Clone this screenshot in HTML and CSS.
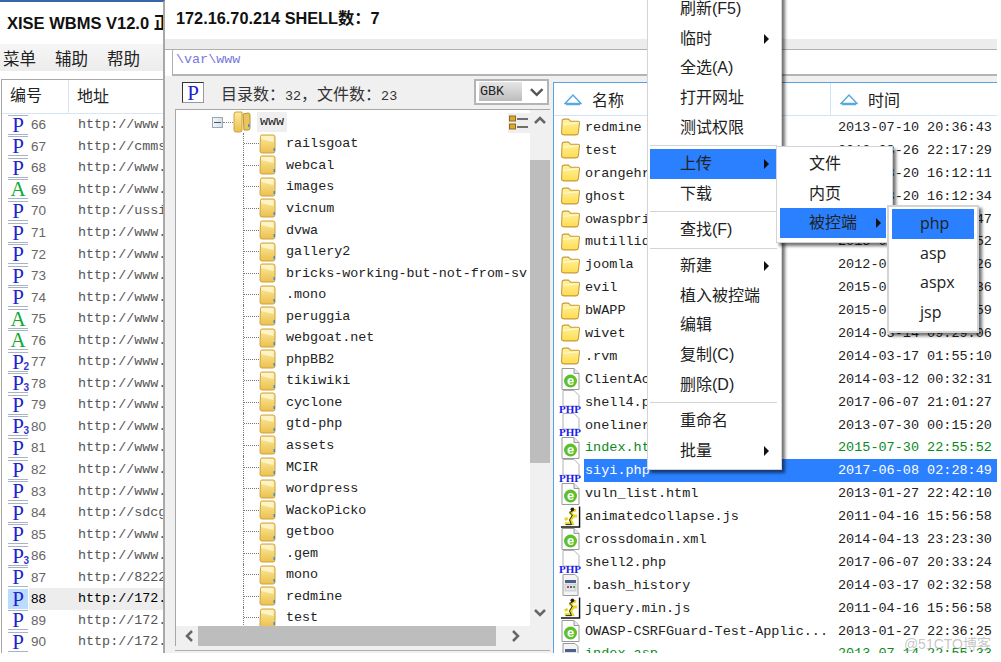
FILE: index.html
```html
<!DOCTYPE html>
<html lang="en">
<head>
    <meta charset="UTF-8">
    <meta name="viewport" content="width=device-width, initial-scale=1.0">
    <title>XISE WBMS</title>
    <link rel="stylesheet" href="styles.css">
</head>
<body>
<svg class="defs" width="0" height="0">
    <defs>
        <linearGradient id="treeFill" x1="0" y1="0" x2="0" y2="1"><stop offset="0" stop-color="#fbeb9e"/><stop offset="1" stop-color="#ecc04e"/></linearGradient>
        <linearGradient id="listFill" x1="0" y1="0" x2="0" y2="1"><stop offset="0" stop-color="#fff3a4"/><stop offset="1" stop-color="#ffdc50"/></linearGradient>
        <symbol id="icoTree" viewBox="0 0 17 20">
            <path d="M1.5 2.5Q1.5 1 3 1H14Q16 1 16 3V17Q16 19 14 19H3Q1 19 1 17Z" fill="url(#treeFill)" stroke="#cfa23c"/>
            <path d="M2 2H13Q14.500 2 14.500 4V8L2 5Z" fill="#fdf3c4"/>
            <rect x="14.500" y="14" width="1.500" height="3" fill="#3d8fd8"/>
        </symbol>
        <symbol id="icoRoot" viewBox="0 0 18 22">
            <path d="M1 3Q1 1 3 1H9V19Q9 21 7 21H3Q1 21 1 19Z" fill="url(#treeFill)" stroke="#cfa23c"/>
            <path d="M10 3L15 2Q17 2 17 4V17Q17 19 15 19H11Z" fill="#e8c65c" stroke="#b89232"/>
            <rect x="15" y="13" width="1.500" height="3" fill="#3d8fd8"/>
        </symbol>
        <symbol id="icoFolder" viewBox="0 0 20 19">
            <path d="M2 4Q2 2 4 2H8L10 4H17Q19 4 18.500 6L17.500 15Q17 17 15 17H4Q1.500 17 1.500 15Z" fill="url(#listFill)" stroke="#c59a38"/>
            <path d="M3 7L18 5.500" stroke="#fff9d0" fill="none"/>
        </symbol>
        <symbol id="icoIe" viewBox="0 0 21 24">
            <path d="M2 1.500H14L19 6.500V22.500H2Z" fill="#fff" stroke="#9a9a9a"/>
            <path d="M14 1.500V6.500H19" fill="#e8e8e8" stroke="#9a9a9a"/>
            <circle cx="10.500" cy="14" r="6.500" fill="#5cc02c"/>
            <text x="10.500" y="18" class="ieMark">e</text>
        </symbol>
        <symbol id="icoPhp" viewBox="0 0 23 24">
            <path d="M4 .5H15L20 5.500V16H4Z" fill="#fff" stroke="#b0b0b0"/>
            <text x="0" y="22.500" class="phpMark">PHP</text>
        </symbol>
        <symbol id="icoJs" viewBox="0 0 22 24">
            <path d="M20.500 1V22.500H1" fill="none" stroke="#111" stroke-width="1.500"/>
            <path d="M5 19H13L11 15L14 11L11 8L14 5H17M14 11H18M8 13L5 15" fill="none" stroke="#e8d820" stroke-width="3"/>
            <circle cx="13" cy="4" r="2" fill="#222"/>
            <path d="M6 20H12L10 15L13 10L10 7L13 6" fill="none" stroke="#222"/>
        </symbol>
        <symbol id="icoBash" viewBox="0 0 21 24">
            <path d="M3 1.500H15L18 4.500V22.500H3Z" fill="#f4f4f4" stroke="#9a9a9a"/>
            <rect x="5" y="7" width="11" height="3" fill="#4e5f8a"/>
            <rect x="5" y="11" width="11" height="7" fill="#e4e4e4" stroke="#aaa" stroke-width=".5"/>
            <rect x="7" y="13" width="2" height="2" fill="#d04040"/>
            <rect x="10" y="13" width="2" height="2" fill="#4060c0"/>
            <rect x="13" y="13" width="2" height="2" fill="#50a050"/>
        </symbol>
        <symbol id="icoSort" viewBox="0 0 18 14">
            <path d="M1 11.500L9 3L17 11.500Z" fill="#fff" stroke="#58aadc" stroke-width="1.500"/>
            <path d="M2 12.500H16" stroke="#58aadc" stroke-width="1.500"/>
        </symbol>
    </defs>
</svg>

<div class="app">
    <section class="hosts">
        <div class="hosts-title">XISE WBMS V12.0 正式版</div>
        <nav class="menubar"><span>菜单</span><span>辅助</span><span>帮助</span></nav>
        <div class="hosts-list">
            <div class="hosts-head"><span class="col-no">编号</span><span class="col-url">地址</span></div>
            <div class="host"><span class="tag">P</span><span class="no">66</span><span class="url">http://www.</span></div>
            <div class="host"><span class="tag">P</span><span class="no">67</span><span class="url">http://cmms</span></div>
            <div class="host"><span class="tag">P</span><span class="no">68</span><span class="url">http://www.</span></div>
            <div class="host"><span class="tag asp">A</span><span class="no">69</span><span class="url">http://www.</span></div>
            <div class="host"><span class="tag">P</span><span class="no">70</span><span class="url">http://ussi</span></div>
            <div class="host"><span class="tag">P</span><span class="no">71</span><span class="url">http://www.</span></div>
            <div class="host"><span class="tag">P</span><span class="no">72</span><span class="url">http://www.</span></div>
            <div class="host"><span class="tag">P</span><span class="no">73</span><span class="url">http://www.</span></div>
            <div class="host"><span class="tag">P</span><span class="no">74</span><span class="url">http://www.</span></div>
            <div class="host"><span class="tag asp">A</span><span class="no">75</span><span class="url">http://www.</span></div>
            <div class="host"><span class="tag asp">A</span><span class="no">76</span><span class="url">http://www.</span></div>
            <div class="host"><span class="tag">P<sub>2</sub></span><span class="no">77</span><span class="url">http://www.</span></div>
            <div class="host"><span class="tag">P<sub>3</sub></span><span class="no">78</span><span class="url">http://www.</span></div>
            <div class="host"><span class="tag">P</span><span class="no">79</span><span class="url">http://www.</span></div>
            <div class="host"><span class="tag">P<sub>3</sub></span><span class="no">80</span><span class="url">http://www.</span></div>
            <div class="host"><span class="tag">P</span><span class="no">81</span><span class="url">http://www.</span></div>
            <div class="host"><span class="tag">P</span><span class="no">82</span><span class="url">http://www.</span></div>
            <div class="host"><span class="tag">P</span><span class="no">83</span><span class="url">http://www.</span></div>
            <div class="host"><span class="tag">P</span><span class="no">84</span><span class="url">http://sdcg</span></div>
            <div class="host"><span class="tag">P</span><span class="no">85</span><span class="url">http://www.</span></div>
            <div class="host"><span class="tag">P<sub>3</sub></span><span class="no">86</span><span class="url">http://www.</span></div>
            <div class="host"><span class="tag">P</span><span class="no">87</span><span class="url">http://8222</span></div>
            <div class="host current"><span class="tag">P</span><span class="no">88</span><span class="url">http://172.</span></div>
            <div class="host"><span class="tag">P</span><span class="no">89</span><span class="url">http://172.</span></div>
            <div class="host"><span class="tag">P</span><span class="no">90</span><span class="url">http://172.</span></div>
        </div>
    </section>

    <section class="shell">
        <h1 class="shell-title">172.16.70.214 SHELL数：7</h1>
        <div class="shell-band"></div>
        <div class="path-box">\var\www</div>
        <div class="shell-body">
            <div class="dirs">
                <div class="dirs-bar">
                    <span class="bar-tag">P</span>
                    <span class="count">目录数：<span class="num">32</span>，文件数：<span class="num">23</span></span>
                    <span class="charset"><span class="charset-val">GBK</span><svg width="16" height="10" viewBox="0 0 16 10"><path d="M2 2L8 8L14 2" fill="none" stroke="#555" stroke-width="2.500"/></svg></span>
                </div>
                <div class="tree-box">
                    <div class="tree-main">
                        <div class="tree">
                            <div class="root"><span class="minus"></span><span class="root-dots"></span><svg class="root-ico"><use href="#icoRoot"/></svg><span class="root-name">www</span></div>
                            <div class="node"><svg class="ico-tree"><use href="#icoTree"/></svg>railsgoat</div>
                            <div class="node"><svg class="ico-tree"><use href="#icoTree"/></svg>webcal</div>
                            <div class="node"><svg class="ico-tree"><use href="#icoTree"/></svg>images</div>
                            <div class="node"><svg class="ico-tree"><use href="#icoTree"/></svg>vicnum</div>
                            <div class="node"><svg class="ico-tree"><use href="#icoTree"/></svg>dvwa</div>
                            <div class="node"><svg class="ico-tree"><use href="#icoTree"/></svg>gallery2</div>
                            <div class="node"><svg class="ico-tree"><use href="#icoTree"/></svg>bricks-working-but-not-from-sv</div>
                            <div class="node"><svg class="ico-tree"><use href="#icoTree"/></svg>.mono</div>
                            <div class="node"><svg class="ico-tree"><use href="#icoTree"/></svg>peruggia</div>
                            <div class="node"><svg class="ico-tree"><use href="#icoTree"/></svg>webgoat.net</div>
                            <div class="node"><svg class="ico-tree"><use href="#icoTree"/></svg>phpBB2</div>
                            <div class="node"><svg class="ico-tree"><use href="#icoTree"/></svg>tikiwiki</div>
                            <div class="node"><svg class="ico-tree"><use href="#icoTree"/></svg>cyclone</div>
                            <div class="node"><svg class="ico-tree"><use href="#icoTree"/></svg>gtd-php</div>
                            <div class="node"><svg class="ico-tree"><use href="#icoTree"/></svg>assets</div>
                            <div class="node"><svg class="ico-tree"><use href="#icoTree"/></svg>MCIR</div>
                            <div class="node"><svg class="ico-tree"><use href="#icoTree"/></svg>wordpress</div>
                            <div class="node"><svg class="ico-tree"><use href="#icoTree"/></svg>WackoPicko</div>
                            <div class="node"><svg class="ico-tree"><use href="#icoTree"/></svg>getboo</div>
                            <div class="node"><svg class="ico-tree"><use href="#icoTree"/></svg>.gem</div>
                            <div class="node"><svg class="ico-tree"><use href="#icoTree"/></svg>mono</div>
                            <div class="node"><svg class="ico-tree"><use href="#icoTree"/></svg>redmine</div>
                            <div class="node"><svg class="ico-tree"><use href="#icoTree"/></svg>test</div>
                        </div>
                        <div class="tree-corner">
                            <svg width="21" height="20" viewBox="0 0 21 20"><rect x="1.500" y="3" width="6" height="5" fill="#e0a828" stroke="#8a6a20"/><rect x="1.500" y="11" width="6" height="5" fill="#e0a828" stroke="#8a6a20"/><path d="M9 6H20M9 14H20" stroke="#444" stroke-width="1.500"/></svg>
                        </div>
                        <div class="vbar">
                            <svg width="14" height="9" viewBox="0 0 14 9"><path d="M2 7L7 2L12 7" fill="none" stroke="#666" stroke-width="2.500"/></svg>
                            <div class="vthumb"></div>
                            <svg width="14" height="9" viewBox="0 0 14 9"><path d="M2 2L7 7L12 2" fill="none" stroke="#666" stroke-width="2.500"/></svg>
                        </div>
                    </div>
                    <div class="hbar">
                        <svg width="10" height="14" viewBox="0 0 10 14"><path d="M8 2L3 7L8 12" fill="none" stroke="#666" stroke-width="2.500"/></svg>
                        <div class="hthumb"></div>
                        <svg width="10" height="14" viewBox="0 0 10 14"><path d="M2 2L7 7L2 12" fill="none" stroke="#666" stroke-width="2.500"/></svg>
                    </div>
                </div>
                <div class="dirs-foot"></div>
            </div>

            <div class="files">
                <div class="files-head">
                    <span class="col-name"><svg class="sort"><use href="#icoSort"/></svg>名称</span>
                    <span class="col-time"><svg class="sort"><use href="#icoSort"/></svg>时间</span>
                </div>
                <div class="file"><svg class="ico"><use href="#icoFolder"/></svg><span class="name">redmine</span><span class="time">2013-07-10 20:36:43</span></div>
                <div class="file"><svg class="ico"><use href="#icoFolder"/></svg><span class="name">test</span><span class="time">2013-08-26 22:17:29</span></div>
                <div class="file"><svg class="ico"><use href="#icoFolder"/></svg><span class="name">orangehrm</span><span class="time">2013-08-20 16:12:11</span></div>
                <div class="file"><svg class="ico"><use href="#icoFolder"/></svg><span class="name">ghost</span><span class="time">2013-08-20 16:12:34</span></div>
                <div class="file"><svg class="ico"><use href="#icoFolder"/></svg><span class="name">owaspbricks</span><span class="time">2013-08-20 16:12:47</span></div>
                <div class="file"><svg class="ico"><use href="#icoFolder"/></svg><span class="name">mutillidae</span><span class="time">2013-08-20 16:12:52</span></div>
                <div class="file"><svg class="ico"><use href="#icoFolder"/></svg><span class="name">joomla</span><span class="time">2012-07-20 16:13:26</span></div>
                <div class="file"><svg class="ico"><use href="#icoFolder"/></svg><span class="name">evil</span><span class="time">2015-07-20 16:13:36</span></div>
                <div class="file"><svg class="ico"><use href="#icoFolder"/></svg><span class="name">bWAPP</span><span class="time">2015-07-20 16:13:59</span></div>
                <div class="file"><svg class="ico"><use href="#icoFolder"/></svg><span class="name">wivet</span><span class="time">2014-03-14 09:29:06</span></div>
                <div class="file"><svg class="ico"><use href="#icoFolder"/></svg><span class="name">.rvm</span><span class="time">2014-03-17 01:55:10</span></div>
                <div class="file"><svg class="ico"><use href="#icoIe"/></svg><span class="name">ClientAccess.xml</span><span class="time">2014-03-12 00:32:31</span></div>
                <div class="file"><svg class="ico ico-php"><use href="#icoPhp"/></svg><span class="name">shell4.php</span><span class="time">2017-06-07 21:01:27</span></div>
                <div class="file"><svg class="ico ico-php"><use href="#icoPhp"/></svg><span class="name">oneliner.php</span><span class="time">2013-07-30 00:15:20</span></div>
                <div class="file changed"><svg class="ico"><use href="#icoIe"/></svg><span class="name">index.html</span><span class="time">2015-07-30 22:55:52</span></div>
                <div class="file selected"><svg class="ico ico-php"><use href="#icoPhp"/></svg><span class="name">siyi.php</span><span class="time">2017-06-08 02:28:49</span></div>
                <div class="file"><svg class="ico"><use href="#icoIe"/></svg><span class="name">vuln_list.html</span><span class="time">2013-01-27 22:42:10</span></div>
                <div class="file"><svg class="ico"><use href="#icoJs"/></svg><span class="name">animatedcollapse.js</span><span class="time">2011-04-16 15:56:58</span></div>
                <div class="file"><svg class="ico"><use href="#icoIe"/></svg><span class="name">crossdomain.xml</span><span class="time">2014-04-13 23:23:30</span></div>
                <div class="file"><svg class="ico ico-php"><use href="#icoPhp"/></svg><span class="name">shell2.php</span><span class="time">2017-06-07 20:33:24</span></div>
                <div class="file"><svg class="ico"><use href="#icoBash"/></svg><span class="name">.bash_history</span><span class="time">2014-03-17 02:32:58</span></div>
                <div class="file"><svg class="ico"><use href="#icoJs"/></svg><span class="name">jquery.min.js</span><span class="time">2011-04-16 15:56:58</span></div>
                <div class="file"><svg class="ico"><use href="#icoIe"/></svg><span class="name">OWASP-CSRFGuard-Test-Applic...</span><span class="time">2013-01-27 22:36:25</span></div>
                <div class="file changed"><svg class="ico"><use href="#icoBash"/></svg><span class="name">index.asp</span><span class="time">2013-07-14 22:55:33</span></div>
            </div>
        </div>
    </section>

    <div class="menu menu-main">
        <div class="item">刷新(F5)</div>
        <div class="item more">临时</div>
        <div class="item">全选(A)</div>
        <div class="item">打开网址</div>
        <div class="item">测试权限</div>
        <div class="sep"></div>
        <div class="item more active">上传</div>
        <div class="item">下载</div>
        <div class="sep"></div>
        <div class="item">查找(F)</div>
        <div class="sep"></div>
        <div class="item more">新建</div>
        <div class="item">植入被控端</div>
        <div class="item">编辑</div>
        <div class="item">复制(C)</div>
        <div class="item">删除(D)</div>
        <div class="sep"></div>
        <div class="item">重命名</div>
        <div class="item more">批量</div>
    </div>
    <div class="menu menu-upload">
        <div class="item">文件</div>
        <div class="item">内页</div>
        <div class="item more active">被控端</div>
    </div>
    <div class="menu menu-lang">
        <div class="item active">php</div>
        <div class="item">asp</div>
        <div class="item">aspx</div>
        <div class="item">jsp</div>
    </div>
    <div class="watermark">@51CTO博客</div>
</div>
</body>
</html>
```

FILE: styles.css
```css
* { box-sizing: border-box; }
html, body { margin: 0; height: 100%; background: #fff; overflow: hidden; }
body { font-family: "Liberation Sans", "Noto Sans CJK SC", sans-serif; color: #222; }
.defs { position: absolute; }

.app { position: relative; display: flex; width: 997px; height: 653px; overflow: hidden; background: #fff; }

/* left window */
.hosts { width: 165px; flex: none; display: flex; flex-direction: column; border-top: 2px solid #3a64a8; border-right: 2px solid #a8a8a8; overflow: hidden; }
.hosts-title { height: 42px; padding: 11px 0 0 7px; font-size: 16.5px; font-weight: bold; color: #111; white-space: nowrap; overflow: hidden; line-height: 20px; }
.menubar { height: 27px; display: flex; gap: 19px; align-items: center; padding-left: 3px; font-size: 16.5px; background: linear-gradient(#f6f6f6, #ececec); color: #222; }
.hosts-list { margin: 8px 0 0 1px; border-top: 1px solid #a8a8a8; border-left: 1px solid #a8a8a8; flex: 1; overflow: hidden; }
.hosts-head { height: 34px; display: flex; align-items: center; font-size: 16px; border-bottom: 1px solid #d8e6f4; color: #222; }
.col-no { width: 67px; padding-left: 8px; border-right: 1px solid #d8e6f4; height: 100%; line-height: 32px; }
.col-url { padding-left: 8px; line-height: 32px; }

.host { height: 21.55px; display: flex; align-items: center; white-space: nowrap; }
.tag { width: 20px; height: 20px; margin-left: 6px; flex: none; position: relative; text-align: center; font: 21px/19px "Liberation Serif", serif; color: #2222cc; border-top: 1px solid #a8b4c4; border-bottom: 1px solid #a8b4c4; }
.tag.asp { color: #10a830; }
.tag sub { position: absolute; right: -1px; bottom: -1px; font: bold 10px/10px "Liberation Sans", sans-serif; color: #3333cc; }
.no { width: 50px; padding-left: 3px; flex: none; font-size: 13.5px; color: #666; }
.url { font: 13.4px "Liberation Mono", monospace; color: #555; }
.host.current { background: linear-gradient(90deg, #fff 27px, #ededed 27px); }
.host.current .tag { background: #bcdcff; border-color: #bcdcff; }
.host.current .no, .host.current .url { color: #000; }

/* right window */
.shell { flex: 1; min-width: 0; display: flex; flex-direction: column; }
.shell-title { height: 39px; margin: 0; padding: 8px 0 0 11px; font-size: 16.3px; line-height: 20px; font-weight: bold; color: #111; }
.shell-band { height: 11px; background: #ececec; border-bottom: 1px solid #b0b0b0; }
.path-box { height: 26px; margin-left: 7px; padding: 0 0 0 3px; border-left: 1px solid #b0b0b0; border-bottom: 2px solid #b4b4b4; font: 13.4px/20px "Liberation Mono", monospace; color: #7878e0; background: #fff; }
.shell-body { flex: 1; display: flex; min-height: 0; background: #f0f0f0; }

.dirs { width: 385px; flex: none; padding: 0 0 0 10px; display: flex; flex-direction: column; margin-right: 3px; }
.dirs-bar { height: 33px; display: flex; align-items: center; }
.bar-tag { width: 22px; height: 21px; margin-left: 7px; text-align: center; font: 21px/20px "Liberation Serif", serif; color: #2222cc; background: #fff; border: 1px solid #999; border-top-color: #333; border-left-color: #333; }
.count { margin-left: 17px; font-size: 16px; color: #333; white-space: nowrap; }
.num { font: 13.4px "Liberation Mono", monospace; }
.charset { margin-left: auto; margin-right: 1px; width: 75px; height: 26px; margin-top: -2px; display: flex; align-items: center; padding: 2px 3px; border: 2px solid #b4b4b4; background: #fff; }
.charset-val { width: 44px; height: 19px; padding-left: 1px; font: 13.4px/19px "Liberation Mono", monospace; color: #222; background: linear-gradient(#e6e6e6, #bcbcbc); margin-right: 7px; }

.tree-box { height: 537px; flex: none; width: 375px; border-top: 1px solid #a8a8a8; border-left: 1px solid #a8a8a8; display: flex; flex-direction: column; background: #fff; }
.tree-main { flex: 1; min-height: 0; display: flex; position: relative; }
.tree { flex: 1; min-width: 0; overflow: hidden; padding-top: 1.500px; font: 13.4px "Liberation Mono", monospace; color: #222; }
.root { height: 21.55px; display: flex; align-items: center; padding-left: 36px; }
.minus { width: 11px; height: 11px; border: 1px solid #9aa8b4; background: linear-gradient(90deg, #f4f6f8, #d8e0e8); position: relative; flex: none; }
.minus::after { content: ""; position: absolute; left: 1px; right: 1px; top: 4px; height: 1px; background: #456; }
.root-dots { width: 10px; border-top: 1px dotted #888; }
.root-ico { width: 18px; height: 22px; flex: none; }
.root-name { margin-left: 6px; padding: 0 3px; height: 20px; line-height: 20px; background: #efefef; }
.node { height: 21.55px; margin-left: 67px; border-left: 1px dotted #777; display: flex; align-items: center; white-space: nowrap; }
.node::before { content: ""; width: 15px; flex: none; border-top: 1px dotted #777; }
.ico-tree { width: 17px; height: 20px; flex: none; margin-right: 10px; }
.tree-corner { position: absolute; right: 20px; top: 3px; width: 22px; height: 20px; background: #efefef; }
.vbar { width: 20px; flex: none; display: flex; flex-direction: column; align-items: center; justify-content: space-between; padding: 6px 0 9px; background: #f0f0f0; position: relative; }
.vthumb { position: absolute; left: 0; right: 0; top: 50px; height: 303px; background: #bdbdbd; }
.hbar { height: 20px; flex: none; display: flex; align-items: center; background: #f0f0f0; padding: 0 29px 0 8px; }
.hthumb { width: 298px; height: 20px; margin: 0 auto 0 4px; background: #bdbdbd; }
.dirs-foot { height: 5px; border-bottom: 1px solid #b0b0b0; }

.files { flex: 1; min-width: 0; margin-top: 6px; border-top: 1px solid #58a0e8; border-left: 1px solid #58a0e8; background: #fff; overflow: hidden; }
.files-head { height: 33px; display: flex; align-items: center; font-size: 16px; color: #222; border-bottom: 1px solid #d0e4f6; }
.files-head .sort { width: 18px; height: 14px; margin-right: 10px; flex: none; }
.col-name { width: 277px; height: 100%; display: flex; align-items: center; padding-left: 10px; border-right: 1px solid #d0e4f6; }
.col-time { display: flex; align-items: center; padding-left: 9px; }
.file { height: 22.9px; display: flex; align-items: center; font: 13.5px "Liberation Mono", monospace; color: #222; white-space: nowrap; }
.ico { width: 21px; height: 24px; flex: none; margin-left: 6px; }
.ico-php { width: 23px; margin-left: 5px; }
.name { margin-left: 4px; width: 253px; flex: none; overflow: hidden; }
.ico-php + .name { margin-left: 3px; }
.file.changed { color: #0a8a1a; }
.file.selected .name, .file.selected .time { color: #fff; }
.file.selected { background: linear-gradient(90deg, #fff 30px, #2a80ff 30px); }
.ieMark { font: bold 13px "Liberation Sans", sans-serif; fill: #fff; text-anchor: middle; }
.phpMark { font: bold 11px "Liberation Serif", serif; fill: #1a1aee; }

/* context menus */
.menu { position: absolute; background: #fff; border: 1px solid #d4d4d4; padding: 0 2px; box-shadow: 3px 3px 3px rgba(0, 0, 0, .55); font-size: 16px; color: #222; }
.item { height: 29.7px; line-height: 29.7px; padding-left: 30px; position: relative; white-space: nowrap; }
.item.more::after { content: ""; position: absolute; right: 5px; top: 10px; border-style: solid; border-width: 5px 0 5px 5px; border-color: transparent transparent transparent #111; }
.item.active { background: #2a80ff; }
.sep { height: 6.500px; padding-top: 3px; }
.sep::after { content: ""; display: block; height: 1px; background: #d4d4d4; margin-right: 2px; }
.menu-main { left: 647px; top: -7px; width: 135px; padding-bottom: 4px; }
.menu-main .more::after { right: 10px; }
.menu-upload { left: 776px; top: 146px; width: 117px; padding: 2px 6px 4px 3px; }
.menu-upload .item { padding-left: 29px; }
.menu-lang { left: 887px; top: 205px; width: 92px; padding: 2px 3px 3px; border-width: 2px; font-family: "Open Sans", "Liberation Sans", sans-serif; }
.menu-lang .item { padding-left: 28px; }
.watermark { position: absolute; right: 6px; bottom: 0; font-size: 14px; color: rgba(150, 150, 150, .55); }
```
